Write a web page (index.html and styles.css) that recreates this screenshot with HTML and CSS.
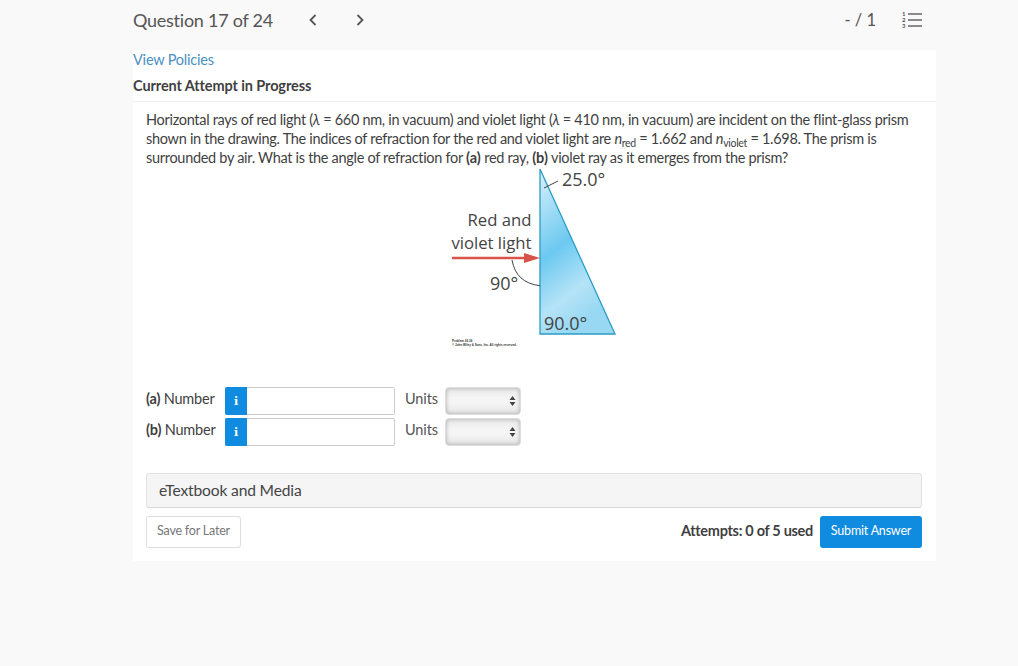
FILE: index.html
```html
<!DOCTYPE html>
<html lang="en">
<head>
<meta charset="utf-8">
<title>Question 17 of 24</title>
<link rel="stylesheet" href="styles.css">
</head>
<body>
<header class="topbar">
  <div class="topbar-left">
    <h1 class="q-title">Question 17 of 24</h1>
    <svg class="chev chev-prev" width="10" height="14" viewBox="0 0 10 14"><path d="M7.500 2 L2.500 7 L7.500 12" fill="none" stroke="#555" stroke-width="1.8"/></svg>
    <svg class="chev chev-next" width="10" height="14" viewBox="0 0 10 14"><path d="M2.500 2 L7.500 7 L2.500 12" fill="none" stroke="#555" stroke-width="1.8"/></svg>
  </div>
  <div class="topbar-right">
    <span class="score">- / 1</span>
    <svg class="list-icon" width="20" height="18" viewBox="0 0 20 18">
      <path d="M6 3 H20 M6 9 H20 M6 15 H20" stroke="#666" stroke-width="1.7" fill="none"/>
      <text x="0" y="5" class="list-num">1</text>
      <text x="0" y="11" class="list-num">2</text>
      <text x="0" y="17" class="list-num">3</text>
    </svg>
  </div>
</header>
<main class="panel">
  <div class="panel-head">
    <a class="policies" href="#">View Policies</a>
    <div class="attempt-title">Current Attempt in Progress</div>
  </div>
  <div class="panel-body">
    <p class="question">Horizontal rays of red light (<i>λ</i> = 660 nm, in vacuum) and violet light (<i>λ</i> = 410 nm, in vacuum) are incident on the flint-glass prism shown in the drawing. The indices of refraction for the red and violet light are <i>n</i><sub>red</sub> = 1.662 and <i>n</i><sub>violet</sub> = 1.698. The prism is surrounded by air. What is the angle of refraction for <b>(a)</b> red ray, <b>(b)</b> violet ray as it emerges from the prism?</p>
    <svg class="figure" width="190" height="190" viewBox="0 0 190 190">
      <defs>
        <linearGradient id="glass" x1="0" y1="0" x2="0.35" y2="1">
          <stop offset="0" stop-color="#dcf1fa"/>
          <stop offset="0.5" stop-color="#6cc9f0"/>
          <stop offset="0.8" stop-color="#b5e3f7"/>
          <stop offset="1" stop-color="#98d8f3"/>
        </linearGradient>
      </defs>
      <path d="M100 4 V169 H175 Z" fill="url(#glass)" stroke="#2a9cc4" stroke-width="1.3"/>
      <path d="M104 23 L118 16" stroke="#444" stroke-width="1" fill="none"/>
      <text x="122" y="21" class="fig-num">25.0°</text>
      <text x="91.500" y="61" text-anchor="end" class="fig-label">Red and</text>
      <text x="91.500" y="84" text-anchor="end" class="fig-label">violet light</text>
      <path d="M12 93 H88" stroke="#d9534a" stroke-width="2.400" fill="none"/>
      <path d="M84 88 L100 93 L84 98 Z" fill="#d9534a"/>
      <path d="M72 95 Q76 118 100 120.700" stroke="#444" stroke-width="1" fill="none"/>
      <text x="50" y="125" class="fig-num">90°</text>
      <text x="104" y="165" class="fig-num">90.0°</text>
      <text x="12" y="177" class="fig-micro">Problem 26.36</text>
      <text x="12" y="180.500" class="fig-micro">© John Wiley &amp; Sons, Inc. All rights reserved.</text>
    </svg>
    <div class="answers">
      <div class="answer-row">
        <span class="answer-label"><b>(a)</b> Number</span>
        <div class="field"><span class="info">i</span><input class="num-input" type="text" aria-label="a number"></div>
        <span class="units">Units</span>
        <div class="select"><svg width="7" height="12" viewBox="0 0 7 12"><path d="M3.500 1 L6.500 5 H0.500 Z M3.500 11 L6.500 7 H0.500 Z" fill="#444"/></svg></div>
      </div>
      <div class="answer-row">
        <span class="answer-label"><b>(b)</b> Number</span>
        <div class="field"><span class="info">i</span><input class="num-input" type="text" aria-label="b number"></div>
        <span class="units">Units</span>
        <div class="select"><svg width="7" height="12" viewBox="0 0 7 12"><path d="M3.500 1 L6.500 5 H0.500 Z M3.500 11 L6.500 7 H0.500 Z" fill="#444"/></svg></div>
      </div>
    </div>
    <div class="etext">eTextbook and Media</div>
    <div class="actions">
      <button class="btn-save" type="button">Save for Later</button>
      <div class="submit-group">
        <span class="attempts">Attempts: 0 of 5 used</span>
        <button class="btn-submit" type="button">Submit Answer</button>
      </div>
    </div>
  </div>
</main>
</body>
</html>
```
FILE: styles.css
```css
* { box-sizing: border-box; }
html, body { margin: 0; height: 100%; }
body {
  background: #f9f9f9;
  font-family: Lato, "Open Sans", sans-serif;
  color: #3f3f3f;
  overflow: hidden;
}
.topbar {
  height: 50px;
  padding: 0 96px 11px 133px;
  display: flex;
  align-items: center;
  justify-content: space-between;
}
.topbar-left, .topbar-right { display: flex; align-items: center; }
.q-title { margin: 0; font-size: 18px; font-weight: 400; color: #555; line-height: 22px; letter-spacing: -0.25px; }
.chev-prev { margin-left: 35px; }
.chev-next { margin-left: 37px; }
.score { font-size: 16.500px; color: #555; margin-right: 26px; }
.list-icon { display: block; }
.list-num { font-family: Lato, sans-serif; font-size: 6px; font-weight: 700; fill: #555; }
.panel {
  width: 803px;
  height: 511px;
  margin-left: 133px;
  background: #fff;
}
.panel-head {
  height: 52px;
  border-bottom: 1px solid #eee;
  padding-top: 1px;
}
.policies {
  display: block;
  color: #4a90c2;
  font-size: 14.500px;
  line-height: 18px;
  letter-spacing: -0.2px;
  text-decoration: none;
}
.attempt-title {
  margin-top: 8px;
  font-size: 14.500px;
  line-height: 18px;
  font-weight: 700;
  letter-spacing: -0.1px;
  color: #3f3f3f;
}
.panel-body { padding: 8px 14px 0 13px; }
.question {
  margin: 0;
  width: 770px;
  font-size: 14.500px;
  line-height: 19px;
  letter-spacing: -0.3px;
  color: #3f3f3f;
}
.question b { letter-spacing: 0; }
.question sub { font-size: 10.500px; line-height: 0; vertical-align: -3px; }
.figure { display: block; margin: -2px 0 0 294px; }
.fig-num { font-family: "Open Sans", sans-serif; font-size: 18px; fill: #444; }
.fig-label { font-family: "Open Sans", sans-serif; font-size: 16.700px; fill: #444; }
.fig-micro { font-family: "Liberation Sans", sans-serif; font-size: 3px; fill: #333; font-weight: 700; }
.answers {
  margin-top: 32px;
  display: flex;
  flex-direction: column;
  gap: 3px;
}
.answer-row { display: flex; align-items: center; height: 28px; }
.answer-label { width: 79px; font-size: 14.500px; letter-spacing: -0.2px; color: #3f3f3f; padding-bottom: 5px; }
.answer-label b { font-weight: 700; }
.field {
  width: 170px;
  height: 28px;
  display: flex;
  border: 1px solid #ccc;
  border-left: 0;
  border-radius: 2px;
}
.info {
  width: 22px;
  margin: -1px 0;
  background: #0f8be0;
  color: #fff;
  font-family: "DejaVu Serif", serif;
  font-weight: 700;
  font-size: 11px;
  display: flex;
  align-items: center;
  justify-content: center;
  border-radius: 2px 0 0 2px;
}
.num-input { flex: 1; min-width: 0; border: 0; background: #fff; padding: 0; }
.units { margin-left: 10px; width: 40px; font-size: 14.500px; letter-spacing: -0.1px; color: #555; padding-bottom: 5px; }
.select {
  width: 76px;
  height: 28px;
  border: 1px solid #ddd;
  border-radius: 4px;
  background: linear-gradient(#e8e8e8, #f5f5f5 40%, #f5f5f5 60%, #e4e4e4);
  box-shadow: inset 0 0 4px #aaa;
  display: flex;
  align-items: center;
  justify-content: flex-end;
  padding-right: 4px;
}
.select svg { display: block; }
.etext {
  margin-top: 27px;
  height: 35px;
  background: #f5f5f5;
  border: 1px solid #e2e2e2;
  border-bottom-color: #d8d8d8;
  border-radius: 3px;
  padding-left: 12px;
  font-size: 15.600px;
  letter-spacing: -0.15px;
  line-height: 33px;
  color: #444;
}
.actions {
  margin-top: 8px;
  display: flex;
  justify-content: space-between;
  align-items: center;
}
.btn-save {
  width: 95px;
  height: 32px;
  background: #fff;
  border: 1px solid #ddd;
  border-radius: 3px;
  font: 400 12.500px Lato, sans-serif;
  letter-spacing: -0.2px;
  color: #777;
  padding: 0 0 3px;
}
.submit-group { display: flex; align-items: center; gap: 7px; }
.attempts { font-size: 14.500px; font-weight: 700; letter-spacing: -0.3px; color: #3f3f3f; padding-bottom: 3px; }
.btn-submit {
  width: 102px;
  height: 32px;
  background: #0f8be0;
  border: 0;
  border-radius: 3px;
  font: 400 12.500px Lato, sans-serif;
  letter-spacing: -0.2px;
  color: #fff;
  padding: 0 0 3px;
}
```
